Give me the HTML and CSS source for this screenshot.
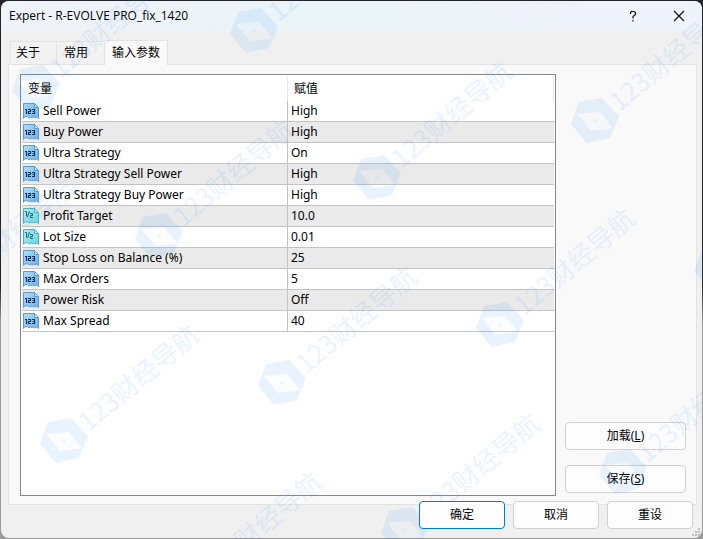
FILE: index.html
```html
<!DOCTYPE html>
<html lang="zh-CN">
<head>
<meta charset="utf-8">
<title>Expert - R-EVOLVE PRO_fix_1420</title>
<link rel="stylesheet" href="styles.css">
</head>
<body>
<svg class="defs" aria-hidden="true">
  <defs>
    <linearGradient id="blue" x1="0" y1="0" x2="1" y2="1"><stop offset="0" stop-color="#b4dcfa"/><stop offset="1" stop-color="#6fb0ea"/></linearGradient>
    <linearGradient id="teal" x1="0" y1="0" x2="1" y2="1"><stop offset="0" stop-color="#b5f0f4"/><stop offset="1" stop-color="#6ad3e0"/></linearGradient>
    <path id="sheet" d="M.5 .5H11.5L15.5 4.500V15.500L13.500 14L12 15L10.500 14L9 15L7.500 14L6 15L4.500 13.500L3 14L2 13.500L.5 15.500Z"/>
    <symbol id="int" viewBox="0 0 16 16">
      <use href="#sheet" fill="url(#blue)" stroke="#5c9ad4"/>
      <path d="M11.500 .5V4.500H15.500Z" fill="#d5ecfc" stroke="#5c9ad4"/>
      <path d="M2 6.500H3.500V11M5 6.500H7.500V8.500H5.500V10.500H8M9 6.500H11.500V10.500H9M9.500 8.500H11.500" fill="none" stroke="#0b3765" stroke-width="1.200"/>
    </symbol>
    <symbol id="real" viewBox="0 0 16 16">
      <use href="#sheet" fill="url(#teal)" stroke="#4cb2c2"/>
      <path d="M11.500 .5V4.500H15.500Z" fill="#dcf9fb" stroke="#4cb2c2"/>
      <path d="M2 3.500H3.500V8.500M6.500 3L4.500 9M7 5.500H9.500V7.500H7.500V9.500H10" fill="none" stroke="#176776"/>
    </symbol>
    <g id="mark">
      <path fill-rule="evenodd" d="M-16-19L7-23L24-5L15 17L-8 22L-24 3ZM-18-7L-4 10L18 7L5-9Z"/>
      <path d="M-18-7L-4 10L18 7L5-9Z" opacity=".15"/>
      <circle r="2" opacity=".7"/>
      <text x="24" y="9" transform="rotate(-40)">123财经导航</text>
    </g>
  </defs>
</svg>
<div class="window">
  <header class="titlebar">
    <h1>Expert - R-EVOLVE PRO_fix_1420</h1>
    <button class="caption" aria-label="帮助"><svg width="12" height="12" viewBox="0 0 12 12"><path d="M3.500 4V2.500L4.500 1.500H7L8.500 2.500V4.500L6 6.500V8.500M6 10V11.500"/></svg></button>
    <button class="caption" aria-label="关闭"><svg width="12" height="12" viewBox="0 0 12 12"><path d="M1 1L11 11M11 1L1 11"/></svg></button>
  </header>
  <nav class="tabs" role="tablist">
    <button class="tab" role="tab">关于</button>
    <button class="tab" role="tab">常用</button>
    <button class="tab active" role="tab" aria-selected="true">输入参数</button>
  </nav>
  <main class="page">
    <div class="list">
      <table>
        <thead><tr><th>变量</th><th>赋值</th></tr></thead>
        <tbody>
          <tr><td><div class="name"><svg><use href="#int"/></svg>Sell Power</div></td><td>High</td></tr>
          <tr><td><div class="name"><svg><use href="#int"/></svg>Buy Power</div></td><td>High</td></tr>
          <tr><td><div class="name"><svg><use href="#int"/></svg>Ultra Strategy</div></td><td>On</td></tr>
          <tr><td><div class="name"><svg><use href="#int"/></svg>Ultra Strategy Sell Power</div></td><td>High</td></tr>
          <tr><td><div class="name"><svg><use href="#int"/></svg>Ultra Strategy Buy Power</div></td><td>High</td></tr>
          <tr><td><div class="name"><svg><use href="#real"/></svg>Profit Target</div></td><td>10.0</td></tr>
          <tr><td><div class="name"><svg><use href="#real"/></svg>Lot Size</div></td><td>0.01</td></tr>
          <tr><td><div class="name"><svg><use href="#int"/></svg>Stop Loss on Balance (%)</div></td><td>25</td></tr>
          <tr><td><div class="name"><svg><use href="#int"/></svg>Max Orders</div></td><td>5</td></tr>
          <tr><td><div class="name"><svg><use href="#int"/></svg>Power Risk</div></td><td>Off</td></tr>
          <tr><td><div class="name"><svg><use href="#int"/></svg>Max Spread</div></td><td>40</td></tr>
        </tbody>
      </table>
    </div>
    <div class="side">
      <button class="btn">加载(<u>L</u>)</button>
      <button class="btn">保存(<u>S</u>)</button>
    </div>
  </main>
  <footer class="actions">
    <button class="btn primary">确定</button>
    <button class="btn">取消</button>
    <button class="btn">重设</button>
  </footer>
  <svg class="grip" width="8" height="8" viewBox="0 0 8 8" aria-hidden="true"><path d="M6 0h2v2h-2zM3 3h2v2h-2zM6 3h2v2h-2zM0 6h2v2h-2zM3 6h2v2h-2zM6 6h2v2h-2z"/></svg>
</div>
<svg class="watermark" aria-hidden="true">
  <use href="#mark" x="36" y="88"/><use href="#mark" x="254" y="31"/>
  <use href="#mark" x="-59" y="294"/><use href="#mark" x="159" y="236"/><use href="#mark" x="377" y="178"/><use href="#mark" x="595" y="121"/>
  <use href="#mark" x="64" y="441"/><use href="#mark" x="282" y="383"/><use href="#mark" x="500" y="325"/><use href="#mark" x="718" y="268"/>
  <use href="#mark" x="187" y="588"/><use href="#mark" x="405" y="530"/><use href="#mark" x="623" y="472"/>
</svg>
</body>
</html>
```
FILE: styles.css
```css
* { box-sizing: border-box; }

body {
  margin: 0;
  padding: 1px;
  min-height: 100vh;
  display: flex;
  position: relative;
  overflow: hidden;
  background: linear-gradient(#262329 0 53%, #9b9b9b 60% 100%);
  color: #000;
  font: 12px/20px "Noto Sans", "Noto Sans CJK SC", sans-serif;
}

button { font: inherit; color: inherit; }

.defs { position: absolute; width: 0; height: 0; }

.window {
  flex: 1;
  display: flex;
  flex-direction: column;
  border-radius: 8px;
  background: #f0f0f0;
  position: relative;
  overflow: hidden;
}

.titlebar {
  display: flex;
  align-items: center;
  height: 30px;
  padding-left: 8px;
  background: linear-gradient(90deg, #eff3fa, #ebf4f8 45%, #ebf4f8 55%, #eff3fb 85%);
}

.titlebar h1 {
  flex: 1;
  margin: 0;
  font: 12px/20px "Open Sans", sans-serif;
}

.caption {
  width: 46px;
  height: 30px;
  padding: 0;
  border: 0;
  background: none;
  display: grid;
  place-items: center;
}

.caption svg { fill: none; stroke: #111; stroke-width: 1.2; }

.tabs {
  display: flex;
  align-items: flex-end;
  padding: 9px 9px 0;
}

.tab {
  height: 23px;
  padding: 0 16px 0 5px;
  border: 1px solid #e3e3e3;
  border-bottom: 0;
  background: #f2f2f2;
  line-height: 22px;
}

.tab + .tab { border-left: 0; padding-left: 7px; }

.tab.active {
  height: 25px;
  margin-bottom: -1px;
  padding: 0 7px;
  background: #f9f9f9;
  position: relative;
}

.page {
  flex: 1;
  display: flex;
  gap: 9px;
  margin: 0 5px 0 7px;
  padding: 9px 10px 8px 11px;
  border: 1px solid #e3e3e3;
  background: #f9f9f9;
}

.list {
  flex: 1;
  padding: 1px;
  border: 1px solid #828790;
  background: #fff;
}

table {
  width: 100%;
  table-layout: fixed;
  border-collapse: separate;
  border-spacing: 0;
}

th, td { padding: 0 3px; text-align: left; font-weight: 400; }
th { height: 25px; padding: 0 6px; border-right: 1px solid #e5e5e5; }
th:first-child { width: 50%; }
td { height: 21px; border-bottom: 1px solid #c4c4c4; }
td:first-child { padding: 0 1px; border-right: 1px solid #c4c4c4; }
tbody tr:nth-child(even) { background: #eaeaea; }

.name { display: flex; align-items: center; gap: 4px; }
.name svg { width: 16px; height: 16px; }

.side {
  width: 121px;
  display: flex;
  flex-direction: column;
  justify-content: flex-end;
  gap: 15px;
  padding-bottom: 3px;
}

.btn {
  height: 28px;
  padding: 0 8px;
  border: 1px solid #d0d0d0;
  border-radius: 4px;
  background: #fdfdfd;
}

.actions {
  display: flex;
  justify-content: flex-end;
  gap: 8px;
  margin-top: -4px;
  padding: 0 9px 9px;
  position: relative;
  z-index: 1;
}

.actions .btn { width: 86px; }
.btn.primary { border-color: #0078d4; }

.grip { position: absolute; right: 2px; bottom: 2px; fill: #bdbdbd; }

.watermark {
  position: absolute;
  inset: 0;
  width: 100%;
  height: 100%;
  pointer-events: none;
  fill: #1e87ff;
  opacity: .09;
  font: 26px "Noto Sans CJK SC", sans-serif;
}
```
